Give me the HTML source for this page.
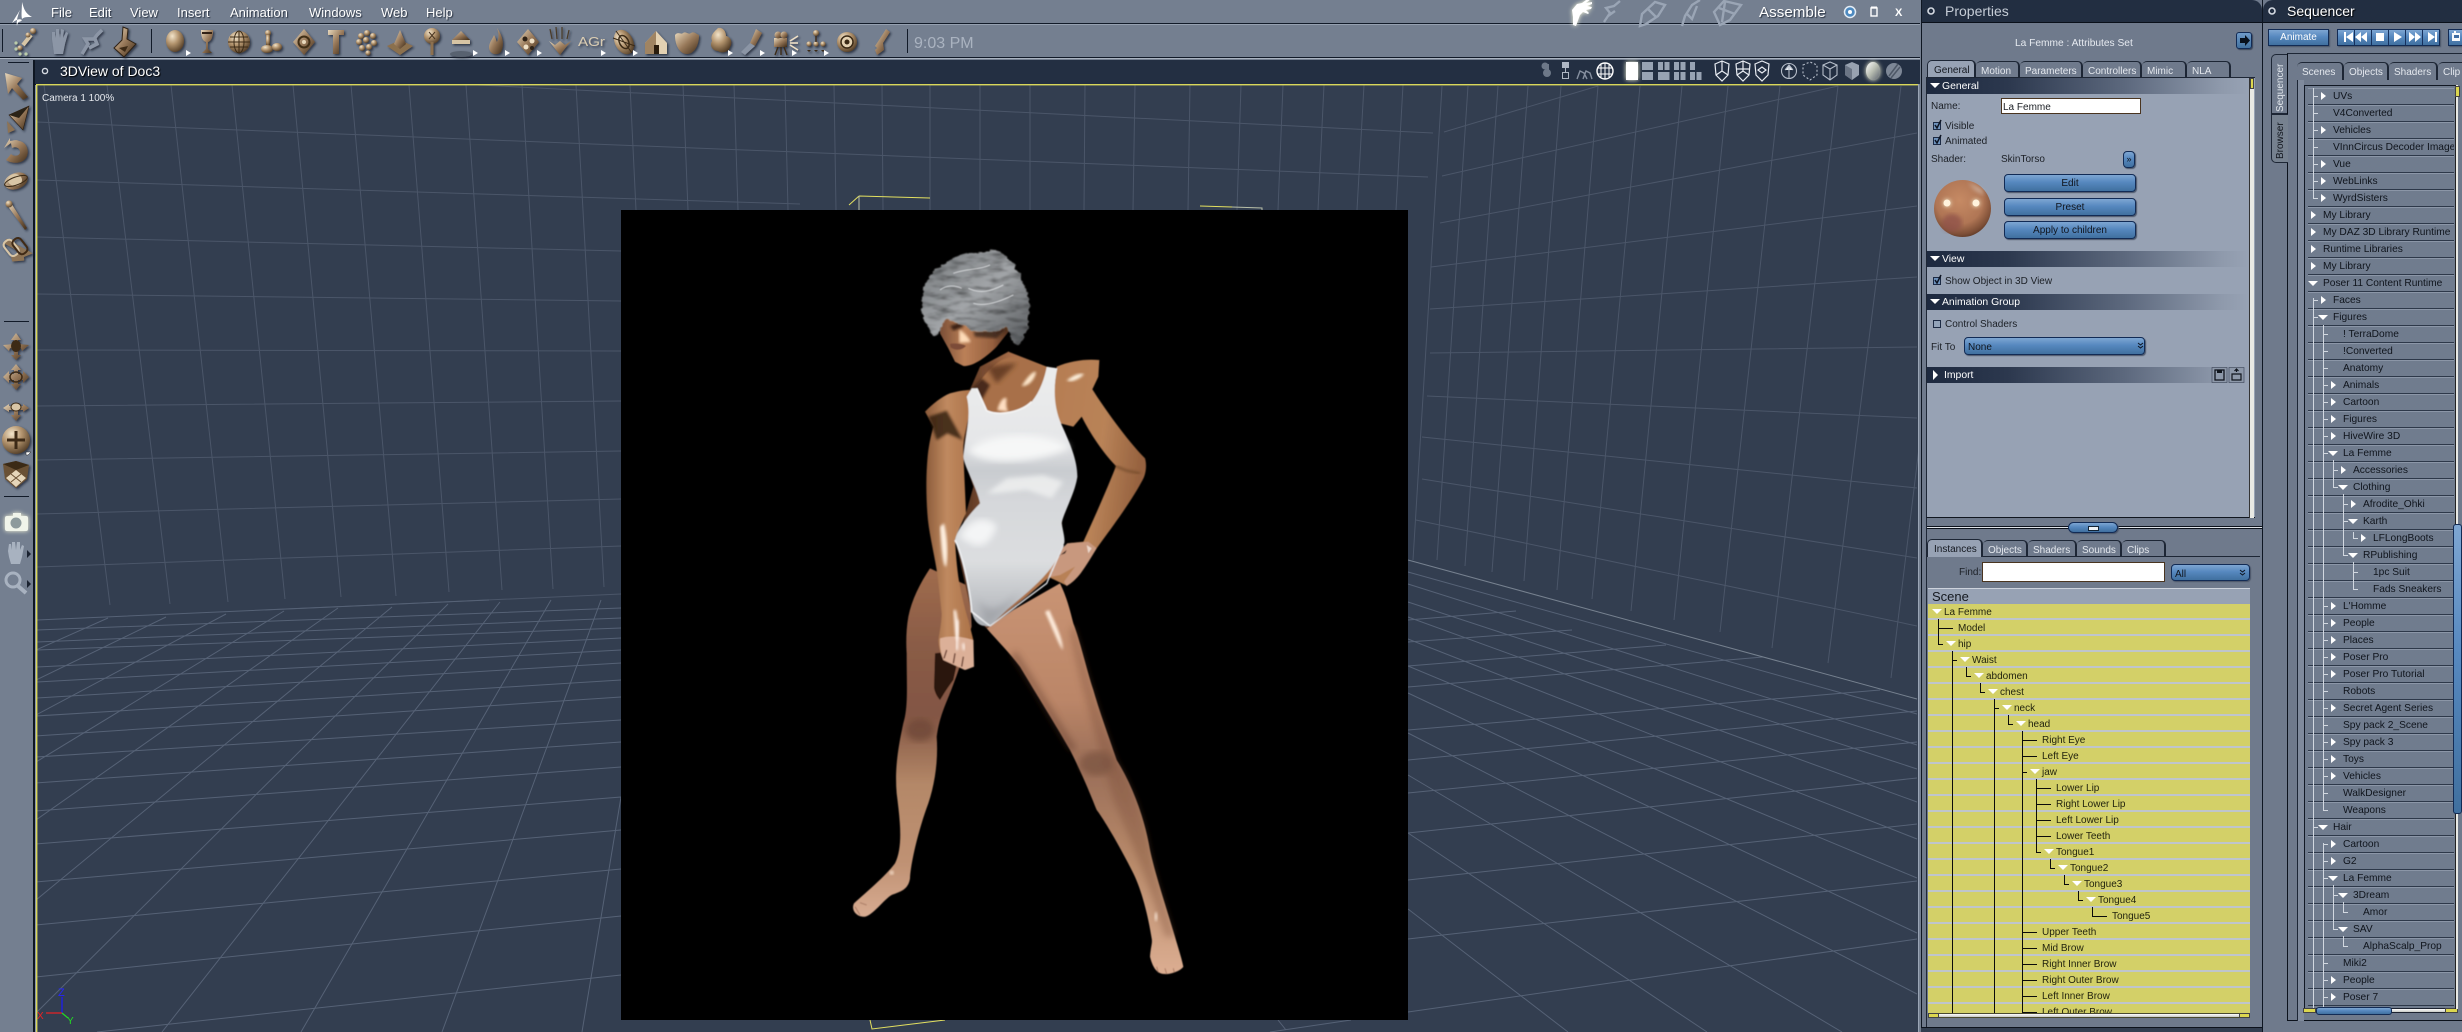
<!DOCTYPE html>
<html><head><meta charset="utf-8"><style>
html,body{margin:0;padding:0;width:2462px;height:1032px;overflow:hidden;background:#747f90;font-family:"Liberation Sans",sans-serif}
.a{position:absolute}
.t{position:absolute;white-space:nowrap;font-size:10px;line-height:12px;margin-top:1px;color:#1c2026}
.m{position:absolute;white-space:nowrap;font-size:13px;line-height:16px;top:5px;color:#fff;text-shadow:1px 1px 1px #2a3342}
.tab{position:absolute;box-sizing:border-box;height:17px;background:#6f7a8c;border-top:1px solid #1d2635;border-right:2px solid #1d2635;border-radius:5px 5px 0 0;color:#e4e8ee;font-size:10px;line-height:20px;padding-left:5px;white-space:nowrap;overflow:hidden}
.tab.on{background:#97a2b4;color:#14181f;border-left:1px solid #1d2635;padding-left:6px;height:18px}
.sec{position:absolute;left:1927px;width:321px;height:16px;background:linear-gradient(90deg,#1d293f,#2c384e 25%,#5d697e 62%,#8f9aac 92%,#97a2b4);color:#fff;font-size:10.4px;line-height:17px;padding-left:15px;box-sizing:border-box}
.sec:before{content:"";position:absolute;left:3px;top:5px;border-top:5px solid #fff;border-left:5px solid transparent;border-right:5px solid transparent}
.sec.c:before{left:6px;top:3px;border-left:5px solid #fff;border-right:0;border-top:5px solid transparent;border-bottom:5px solid transparent}
.btn{position:absolute;box-sizing:border-box;background:linear-gradient(#7ea6d2,#5688bf 45%,#40709f);border:1px solid #122b55;border-radius:4px;box-shadow:1px 1px 1px #4a5568;color:#10151d;font-size:10px;text-align:center;line-height:17px}
.sr{position:absolute;left:1928px;width:322px}
.y{box-sizing:border-box;height:16px;background:#d3d068;border-bottom:2px solid;border-image:linear-gradient(#7c88a6 50%,#bfc5cc 50%) 2;position:relative;font-size:10px;line-height:17px;color:#23240f;white-space:nowrap;padding-left:var(--x)}
.y.d:before{content:"";position:absolute;left:calc(var(--x) - 12px);top:5px;border-top:5px solid #fff;border-left:5px solid transparent;border-right:5px solid transparent}
.r{box-sizing:border-box;height:17px;background:#707c8e;border-bottom:1px solid #2d3849;box-shadow:inset 0 1px 0 #8b96a7;position:relative;font-size:10.2px;line-height:17px;color:#0f141c;white-space:nowrap;padding-left:var(--x)}
.r.o:before{content:"";position:absolute;left:calc(var(--x) - 12px);top:4px;border-left:5px solid #fff;border-top:4px solid transparent;border-bottom:4px solid transparent}
.r.d:before{content:"";position:absolute;left:calc(var(--x) - 15px);top:6px;border-top:5px solid #fff;border-left:5px solid transparent;border-right:5px solid transparent}
.l0{--x:15px}.l1{--x:25px}.l2{--x:35px}.l3{--x:45px}.l4{--x:55px}.l5{--x:65px}
</style></head><body>

<!-- top bars -->
<div class="a" style="left:0;top:0;width:1919px;height:23px;background:#747f90"></div>
<div class="a" style="left:0;top:23px;width:1920px;height:1px;background:#111a28"></div>
<div class="a" style="left:0;top:24px;width:1920px;height:1px;background:#95a0b0"></div>
<div class="a" style="left:0;top:57px;width:1920px;height:1px;background:#111a28"></div>
<div class="a" style="left:0;top:58px;width:1920px;height:1px;background:#aab3c0"></div>
<div class="m" style="left:51px">File</div><div class="m" style="left:89px">Edit</div><div class="m" style="left:130px">View</div><div class="m" style="left:177px">Insert</div><div class="m" style="left:230px">Animation</div><div class="m" style="left:309px">Windows</div><div class="m" style="left:381px">Web</div><div class="m" style="left:426px">Help</div>
<div class="a" style="left:1759px;top:4px;font-size:15.2px;line-height:18px;color:#fff;white-space:nowrap;text-shadow:1px 1px 1px #2a3342">Assemble</div>
<div class="a" style="left:914px;top:35px;font-size:16px;line-height:18px;color:#aab3c0;white-space:nowrap">9:03 PM</div>

<!-- left toolbar column -->
<div class="a" style="left:33px;top:60px;width:2px;height:972px;background:#0e1622"></div>
<div class="a" style="left:35px;top:60px;width:1px;height:972px;background:#8c97a8"></div>

<!-- 3D view -->
<div class="a" style="left:35px;top:60px;width:1885px;height:24px;background:#232f42"></div>
<div class="a" style="left:60px;top:63px;font-size:14px;line-height:16px;color:#fff;white-space:nowrap;text-shadow:1px 1px 1px #000">3DView of Doc3</div>
<div class="a" style="left:37px;top:84px;width:1882px;height:948px;background:#333e50;overflow:hidden"></div>
<svg class="a" style="left:0;top:0" width="1919" height="1032" viewBox="0 0 1919 1032">
<defs><clipPath id="vw"><rect x="37" y="85" width="1881" height="947"/></clipPath>
<linearGradient id="lg1v" x1="0" x2="0" y1="0" y2="1"><stop offset="0" stop-color="#a06c4e"/><stop offset=".22" stop-color="#8a5c46"/><stop offset=".42" stop-color="#835644"/><stop offset=".62" stop-color="#b48868"/><stop offset=".85" stop-color="#c09274"/><stop offset="1" stop-color="#d8ac92"/></linearGradient>
<linearGradient id="lg2" x1="0" x2="0" y1="0" y2="1"><stop offset="0" stop-color="#c99474"/><stop offset=".3" stop-color="#bb8668"/><stop offset=".47" stop-color="#9a6e58"/><stop offset=".72" stop-color="#b98b6b"/><stop offset="1" stop-color="#dcae92"/></linearGradient>
<linearGradient id="arm" x1="0" x2="1"><stop offset="0" stop-color="#8a5a3a"/><stop offset=".45" stop-color="#c08a60"/><stop offset="1" stop-color="#ab7248"/></linearGradient>
<linearGradient id="arm2" x1="0" x2="1" y1="0" y2=".3"><stop offset="0" stop-color="#b67d52"/><stop offset=".6" stop-color="#b98358"/><stop offset="1" stop-color="#96623f"/></linearGradient>
<linearGradient id="chest" x1="0" x2="1"><stop offset="0" stop-color="#4c2c1b"/><stop offset=".45" stop-color="#a56c48"/><stop offset="1" stop-color="#b98052"/></linearGradient>
<linearGradient id="face" x1="0" x2="1"><stop offset="0" stop-color="#7a4e36"/><stop offset=".35" stop-color="#bb8058"/><stop offset=".75" stop-color="#96603f"/><stop offset="1" stop-color="#4a2b1b"/></linearGradient>
<linearGradient id="suit" x1="0" x2="0" y1="0" y2="1"><stop offset="0" stop-color="#eceded"/><stop offset=".28" stop-color="#e6e7e9"/><stop offset=".4" stop-color="#c9ccd0"/><stop offset=".52" stop-color="#d6d8db"/><stop offset=".75" stop-color="#dcdee0"/><stop offset="1" stop-color="#aeb1b6"/></linearGradient>
<linearGradient id="hair" x1="0" x2="1" y1="0" y2="1"><stop offset="0" stop-color="#74787b"/><stop offset=".5" stop-color="#a2a5a8"/><stop offset="1" stop-color="#56595c"/></linearGradient>
<filter id="b4"><feGaussianBlur stdDeviation="4"/></filter><filter id="b7"><feGaussianBlur stdDeviation="7"/></filter><filter id="b10"><feGaussianBlur stdDeviation="10"/></filter>
<filter id="soft" x="-5%" y="-5%" width="110%" height="110%"><feGaussianBlur stdDeviation="1.800"/></filter>
<filter id="hf" x="-15%" y="-15%" width="130%" height="130%">
<feTurbulence type="fractalNoise" baseFrequency=".018 .06" numOctaves="3" seed="11" result="n"/>
<feDisplacementMap in="SourceGraphic" in2="n" scale="18" xChannelSelector="R" yChannelSelector="G" result="d"/>
<feColorMatrix in="n" type="matrix" values="1.5 0 0 0 .12 1.5 0 0 0 .12 1.5 0 0 0 .12 0 0 0 0 1" result="g"/>
<feComposite in="g" in2="d" operator="in" result="tex"/>
<feBlend in="tex" in2="d" mode="multiply" result="m"/>
<feGaussianBlur in="m" stdDeviation="2.200"/>
</filter>
</defs>
<g clip-path="url(#vw)" fill="none" stroke="#4b5669" stroke-width="1">
<path d="M478 85L1433 133M36 122L1428 177M36 180L800 204M36 237L621 251M36 294L621 301M36 350L621 351M36 406L621 401M36 460L621 451M36 514L621 499M36 567L621 546M265 610L621 594"/>
<path d="M44 85L110 605M107 85L170 604M171 85L228 602M232 85L285 599M293 85L341 597M351 85L396 596M409 85L449 592M466 85L502 590M522 85L553 589M576 85L604 587M630 85L636 210M683 85L688 210M734 85L738 210M785 85L788 210M834 85L836 210M882 85L883 210M930 85L930 210M980 85L980 210M1030 85L1030 210M1085 85L1084 210M1135 85L1133 210M1190 85L1188 210M1241 85L1237 210M1283 85L1278 210M1324 85L1318 210M1364 85L1357 210M1403 85L1396 210"/>
<path d="M1442 86L1413 560M1468 86L1437 560M1498 86L1465 566M1528 86L1492 572M1561 86L1524 581M1598 86L1557 590M1640 86L1592 599M1682 86L1631 611M1728 86L1674 620M1780 86L1720 632M1838 86L1772 648M1901 86L1828 663M1963 86L1891 678"/>
<path d="M1444 132L1598 86M1442 176L1838 86M1440 223L1917 133M1431 267L1917 206M1430 309L1917 277M1430 353L1917 347M1427 396L1917 418M1422 437L1917 488M1422 479L1917 558M1416 520L1917 626"/>
<g stroke="#566276">
<path d="M1408 572L1917 714M1408 584L1917 745M1408 602L1917 769M1408 617L1917 802M1408 639L1917 839M1408 666L1917 878M1408 693L1917 933M1408 733L1917 994M1408 775L1842 1032M1408 833L1707 1032M1408 909L1568 1032"/>
<path d="M1408 1012L1917 939M1408 939L1917 881M1408 880L1917 824M1408 833L1917 778M1408 793L1917 742M1408 760L1917 711M1408 730L1880 690M1408 687L1763 657M1408 666L1666 645M1408 642L1572 630M1408 620L1516 611"/>
</g>
<path d="M1408 560L1917 699" stroke="#76818f"/>
<g stroke="#566276">
<path d="M36 620L489 600M36 630L621 608M36 642L621 618M36 650L621 628M36 667L621 638M36 682L621 650M36 698L621 663M36 716L621 680M36 736L621 697M36 757L621 720M36 783L621 742M36 811L621 767M36 844L621 797M36 882L621 830M36 925L621 869M36 977L621 916M97 1032L621 975"/>
<path d="M36 650L108 618M36 680L166 617M36 715L226 614M36 762L284 611M36 820L338 608M36 900L392 607M36 1013L448 604M162 1032L500 602M301 1032L551 600M442 1032L601 600M582 1032L621 797"/>
<path d="M1270 1032L1351 1020M1278 1020L1286 1030"/>
</g>
</g>
<rect x="35" y="84" width="1884" height="1" fill="#0e1622"/>
<rect x="36" y="84" width="1883" height="1.400" fill="#d9d75a"/>
<rect x="36" y="84" width="1.400" height="948" fill="#d9d75a"/>
<rect x="1918" y="84" width="1" height="948" fill="#9aa5b5"/>
<rect x="1919" y="60" width="2" height="972" fill="#0e1622"/>
<path d="M859 196L930 198M859 196L849 205M1200 206L1232 207" stroke="#e3e060" fill="none"/>
<path d="M1232 207L1262 208L1262 211M859 196L859 210" stroke="#b8bfa8" fill="none"/>
<path d="M870 1020L872 1029L945 1020" stroke="#e3e060" fill="none"/>
<path d="M62 997V1013" stroke="#1a1aff" stroke-width="1.200"/><path d="M46 1013H62" stroke="#e22" stroke-width="1.200"/><path d="M62 1013L68 1018" stroke="#2d2" stroke-width="1.200"/>
<text x="58" y="996" fill="#2424ff" font-family="Liberation Sans" font-size="11">Z</text>
<text x="37" y="1019" fill="#e22" font-family="Liberation Sans" font-size="10">X</text>
<text x="67" y="1024" fill="#2d2" font-family="Liberation Sans" font-size="10">Y</text>
<text x="42" y="101" fill="#e6e9ee" font-family="Liberation Sans" font-size="10">Camera 1 100%</text>

<!-- render -->
<rect x="621" y="210" width="787" height="810" fill="#000"/>
<g transform="translate(840 220) scale(.33333)"><g filter="url(#soft)">
<path d="M270 1045C240 1090 215 1140 205 1190C198 1230 198 1270 200 1300C200 1400 205 1460 190 1510C170 1600 165 1660 170 1720C180 1800 190 1880 165 1930C135 1970 80 2015 42 2050C32 2070 50 2092 75 2090C100 2085 130 2040 155 2025C180 2015 205 2010 210 1975C212 1930 235 1830 265 1750C285 1690 295 1620 290 1550C300 1480 320 1450 345 1380C365 1330 380 1260 395 1220L390 1100Z" fill="url(#lg1v)"/>
<ellipse cx="240" cy="1530" rx="44" ry="34" fill="#6a4434" filter="url(#b10)" opacity=".7"/>
<path d="M285 1300L360 1290L340 1380C325 1400 312 1420 300 1440C290 1430 282 1410 282 1400Z" fill="#2a140c"/>
<path d="M440 1225L520 1170L660 1090C680 1130 690 1170 700 1210C720 1260 740 1350 760 1410C780 1480 810 1560 830 1620C880 1700 915 1800 930 1890C945 1960 975 2050 1005 2150C1015 2185 1025 2215 1030 2240C1020 2255 985 2264 975 2262C955 2262 940 2250 930 2210C932 2180 938 2170 935 2155C925 2090 905 2010 880 1960C850 1900 800 1810 770 1770C750 1720 730 1670 690 1590C650 1520 600 1440 540 1340C510 1300 470 1260 440 1225Z" fill="url(#lg2)"/>
<path d="M700 1210C720 1260 740 1350 760 1410C780 1480 810 1560 830 1620C880 1700 915 1800 930 1890C945 1960 975 2050 1005 2150L975 2150C930 2000 880 1880 820 1740C790 1620 720 1400 690 1240Z" fill="#7a4e38" opacity=".35" filter="url(#b10)"/>
<ellipse cx="770" cy="1630" rx="50" ry="36" fill="#7a5240" filter="url(#b10)" opacity=".7"/>
<path d="M520 1300C600 1420 640 1500 700 1590" stroke="#5a3626" stroke-width="22" opacity=".4" fill="none" filter="url(#b10)"/>
<path d="M385 520L420 440L505 395L620 440L650 445L640 540L660 610L712 770L665 900L670 1000L630 1070L560 1130L440 1225L395 1180L350 980L400 800L370 710Z" fill="url(#chest)"/>
<path d="M430 470C470 420 500 410 530 410L620 445L605 500L570 555L500 580L440 575L385 530Z" fill="#a87048"/>
<path d="M385 515L425 475L450 495L425 540L400 560Z" fill="#4a2c1a" filter="url(#b4)"/>
<path d="M440 440L530 430L470 490Z" fill="#6a4028" filter="url(#b7)"/>
<path d="M255 575C280 550 305 530 330 520C350 514 372 510 390 510L395 560C380 610 368 660 370 700L378 880C365 910 350 940 345 960C348 1010 352 1060 360 1100C368 1140 378 1180 385 1200L400 1260L400 1340L375 1350L310 1320C302 1300 295 1280 295 1260C300 1230 305 1205 305 1180C300 1130 295 1090 290 1050C280 990 265 930 262 880C258 820 258 770 262 720C265 680 272 650 280 620Z" fill="url(#arm)"/>
<path d="M265 590L320 572L368 660L322 640L290 660Z" fill="#2e1a10" opacity=".8" filter="url(#b4)"/>
<path d="M300 1255C330 1245 370 1250 400 1260L402 1340L375 1350L310 1320C302 1300 298 1275 300 1255Z" fill="#dcb098"/>
<path d="M312 1315L320 1290M340 1330L345 1300M365 1340L370 1310" stroke="#6a4234" stroke-width="4"/>
<path d="M650 440C690 422 740 416 778 420L775 470L757 508C790 560 860 660 915 715C922 740 916 768 905 785C870 850 810 930 770 985L722 1058C710 1075 695 1090 680 1097L628 1072L675 1000L682 970L730 965C760 900 800 810 828 738C790 700 750 640 725 590L700 620L660 610L640 540Z" fill="url(#arm2)"/>
<path d="M640 1010L682 970L745 965L770 985C755 1010 740 1035 722 1060C710 1075 695 1090 680 1098L672 1085L705 1040L660 1065L625 1072Z" fill="#c8987e"/>
<path d="M642 1020L680 990L675 1000L640 1012Z" fill="#1a0e0a"/>
<path d="M825 738L860 752L900 760" stroke="#6a4428" stroke-width="5" fill="none" filter="url(#b4)"/>
<path d="M380 530L395 505L410 505L440 572C480 590 545 575 575 545C600 515 615 470 620 440L652 445C640 500 640 560 665 615C690 670 712 720 712 770C705 820 670 880 665 910C670 940 678 965 670 975C640 1060 570 1110 500 1170L450 1218C425 1220 405 1215 395 1175C392 1120 370 1010 345 960C350 930 390 880 420 850C410 800 372 740 370 710C375 650 395 590 380 530Z" fill="url(#suit)"/>
<path d="M385 690C430 640 600 625 690 680C640 720 430 750 385 690Z" fill="#f6f7f7" filter="url(#b10)"/>
<path d="M440 820L500 775L610 765L670 785L635 835L560 810L470 820Z" fill="#eff0f0" filter="url(#b7)" opacity=".85"/>
<path d="M360 950C380 900 440 880 470 920C440 1000 400 980 360 950Z" fill="#f4f5f6" filter="url(#b10)"/>
<path d="M345 960C370 1010 392 1120 395 1175L450 1218" stroke="#f0f2f4" stroke-width="5" fill="none"/>
<path d="M450 1218L620 1090L670 975" stroke="#e4e6e9" stroke-width="4" fill="none"/>
<path d="M410 505L440 572C480 590 545 575 575 545" stroke="#f6f6f6" stroke-width="5" fill="none"/>
<path d="M400 1100C420 1180 470 1190 540 1110L500 1170L440 1215Z" fill="#8e9196" opacity=".45" filter="url(#b10)"/>
<path d="M680 482C700 465 720 458 732 462C720 476 695 488 680 482Z" fill="#fff3e0" filter="url(#b4)"/>
<path d="M545 498C560 475 575 455 588 455C585 478 565 500 545 498Z" fill="#ffe8cc" filter="url(#b4)"/>
<path d="M472 570C480 540 492 530 500 535C498 550 498 565 505 575Z" fill="#ffdfc2" filter="url(#b4)"/>
<path d="M300 920C305 1000 310 1040 318 1040C325 1010 322 950 312 910Z" fill="#fff0e0" filter="url(#b4)"/>
<path d="M340 1170C345 1220 345 1262 352 1262C358 1240 355 1200 348 1170Z" fill="#ffefe2" filter="url(#b4)"/>
<path d="M615 1175C640 1230 655 1270 668 1290C670 1255 640 1200 628 1170Z" fill="#ffeddd" filter="url(#b4)"/>
<path d="M352 1200L350 1290M370 1270L372 1290" stroke="#fff4ee" stroke-width="7" fill="none" filter="url(#b4)"/>
<circle cx="155" cy="1958" r="6" fill="#f4dcc8" filter="url(#b4)"/>
<ellipse cx="948" cy="2090" rx="4" ry="14" fill="#f4e0d0" filter="url(#b4)"/>
<path d="M740 975L755 985L745 1000Z" fill="#ecd8cc"/>
<path d="M45 2060L60 2085M60 2048L80 2055" stroke="#8c5c48" stroke-width="3" opacity=".6"/>
<path d="M950 2240L955 2258M975 2245L980 2262M1000 2245L1003 2258" stroke="#8c5c48" stroke-width="3" opacity=".6"/>
<path d="M300 300L330 280L490 285L510 330L470 380C440 410 400 440 370 438L345 425L325 385L300 340Z" fill="url(#face)"/>
<path d="M358 328C375 340 388 355 392 366L358 368Z" fill="#ffdcb8" filter="url(#b4)"/>
<path d="M330 372C345 368 370 372 378 378C365 392 345 392 332 382Z" fill="#7c4b38"/>
<path d="M330 318L365 305L370 320L340 332Z" fill="#3a2418" filter="url(#b4)"/>
<path d="M400 335L500 325L470 355L405 350Z" fill="#2c1a12" opacity=".7" filter="url(#b4)"/>
</g>
<!-- hair -->
<path d="M248 225C258 175 285 140 315 132C350 100 420 90 472 97C512 115 532 140 542 175C562 212 572 245 565 292C566 325 556 350 532 374C517 364 508 345 502 318C480 336 440 336 395 334C370 315 345 298 320 300C308 318 300 338 282 346C262 330 254 308 252 285C243 265 244 243 248 225Z" fill="url(#hair)" filter="url(#hf)"/>
<g fill="none" stroke="#e8eaec" stroke-width="3" opacity=".75" filter="url(#soft)">
<path d="M385 205C420 222 450 215 490 195"/><path d="M400 250C440 262 490 240 520 225"/><path d="M340 160C380 145 420 150 450 135"/><path d="M300 210C320 195 345 195 365 205"/>
</g>
</g>
</svg>

<!-- Properties panel -->
<div class="a" style="left:1921px;top:0;width:341px;height:1032px;background:#6f7a8c"></div>
<div class="a" style="left:1921px;top:0;width:341px;height:23px;background:#222e41;border-bottom:1px solid #0a101a;border-radius:0 10px 0 0;box-sizing:border-box"></div>
<div class="a" style="left:1945px;top:3px;font-size:14px;line-height:16px;color:#c5ccd6;white-space:nowrap">Properties</div>
<div class="t" style="left:2015px;top:37px;width:116px;color:#e6eaf0;font-size:10.2px">La Femme : Attributes Set</div>
<div class="a" style="left:2236px;top:32px;width:16px;height:17px;background:linear-gradient(#6e9ac8,#41719f);border:1px solid #122b55;border-radius:3px;box-sizing:border-box;box-shadow:1px 1px 1px #3a4456"></div>
<div class="tab on" style="left:1927px;top:60px;width:49px">General</div>
<div class="tab" style="left:1976px;top:61px;width:44px">Motion</div>
<div class="tab" style="left:2020px;top:61px;width:63px">Parameters</div>
<div class="tab" style="left:2083px;top:61px;width:59px">Controllers</div>
<div class="tab" style="left:2142px;top:61px;width:45px">Mimic</div>
<div class="tab" style="left:2187px;top:61px;width:44px">NLA</div>
<div class="a" style="left:1926px;top:77px;width:329px;height:441px;background:#97a2b4;border-left:1px solid #1d2635;border-bottom:1px solid #10161f;border-top:1px solid #1d2635;box-sizing:border-box"></div>
<div class="a" style="left:2249px;top:78px;width:4px;height:440px;background:#e8e9e4;border-left:1px solid #333"></div>
<div class="a" style="left:2250px;top:78px;width:4px;height:11px;background:#dcd74f;border:1px solid #444;box-sizing:border-box"></div>
<div class="sec" style="top:78px">General</div>
<div class="sec" style="top:251px">View</div>
<div class="sec" style="top:294px">Animation Group</div>
<div class="sec c" style="top:367px;padding-left:17px">Import</div>
<div class="t" style="left:1931px;top:100px">Name:</div>
<div class="a" style="left:2001px;top:98px;width:140px;height:16px;background:#fff;border:1px solid #4a3520;box-sizing:border-box;font-size:10px;line-height:17px;padding-left:1px;color:#1c2026">La Femme</div>
<div class="t" style="left:1945px;top:120px">Visible</div>
<div class="t" style="left:1945px;top:135px">Animated</div>
<div class="t" style="left:1931px;top:153px">Shader:</div>
<div class="t" style="left:2001px;top:153px">SkinTorso</div>
<div class="btn" style="left:2123px;top:151px;width:12px;height:17px;line-height:14px;font-size:9px">&#187;</div>
<div class="btn" style="left:2004px;top:174px;width:132px;height:18px">Edit</div>
<div class="btn" style="left:2004px;top:198px;width:132px;height:18px">Preset</div>
<div class="btn" style="left:2004px;top:221px;width:132px;height:18px">Apply to children</div>
<div class="t" style="left:1945px;top:275px">Show Object in 3D View</div>
<div class="t" style="left:1945px;top:318px">Control Shaders</div>
<div class="t" style="left:1931px;top:341px">Fit To</div>
<div class="btn" style="left:1964px;top:337px;width:181px;height:18px;text-align:left;padding-left:3px;line-height:20px">None</div>
<div class="a" style="left:1926px;top:526px;width:337px;height:3px;border-top:1px solid #0c121c;border-bottom:1px solid #0c121c;background:#dfe3e8;box-sizing:border-box"></div>
<div class="btn" style="left:2068px;top:522px;width:50px;height:11px;border-radius:6px"></div>
<div class="a" style="left:2088px;top:526px;width:9px;height:3px;background:#eef2f7;border:1px solid #123"></div>
<div class="tab on" style="left:1927px;top:539px;width:56px">Instances</div>
<div class="tab" style="left:1983px;top:540px;width:45px">Objects</div>
<div class="tab" style="left:2028px;top:540px;width:49px">Shaders</div>
<div class="tab" style="left:2077px;top:540px;width:45px">Sounds</div>
<div class="tab" style="left:2122px;top:540px;width:44px">Clips</div>
<div class="a" style="left:1983px;top:556px;width:277px;height:1px;background:#1d2635"></div>
<div class="t" style="left:1959px;top:566px">Find:</div>
<div class="a" style="left:1982px;top:562px;width:183px;height:20px;background:#fff;border:1px solid #4a3520;box-sizing:border-box"></div>
<div class="btn" style="left:2171px;top:564px;width:79px;height:17px;text-align:left;padding-left:3px;line-height:19px">All</div>
<div class="a" style="left:1928px;top:588px;width:322px;height:1px;background:#ccd2dc"></div>
<div class="a" style="left:1928px;top:589px;width:322px;height:15px;background:#97a2b4;font-size:13px;line-height:15px;color:#14181f;padding-left:4px;box-sizing:border-box">Scene</div>
<div class="a" style="left:1926px;top:518px;width:1px;height:510px;background:#1d2635"></div>
<div class="a" style="left:1921px;top:1027px;width:341px;height:5px;background:#333e50;border-top:1px solid #0c121c;box-sizing:border-box"></div>
<div class="a" style="left:1921px;top:0;width:1px;height:1027px;background:#0e1622"></div>
<div class="a" style="left:2262px;top:0;width:1px;height:1032px;background:#0e1622"></div>

<!-- Scene tree -->
<div class="sr" style="top:604px;height:409px;overflow:hidden">
<div class="y d" style="--x:16px">La Femme</div>
<div class="y" style="--x:30px">Model</div>
<div class="y d" style="--x:30px">hip</div>
<div class="y d" style="--x:44px">Waist</div>
<div class="y d" style="--x:58px">abdomen</div>
<div class="y d" style="--x:72px">chest</div>
<div class="y d" style="--x:86px">neck</div>
<div class="y d" style="--x:100px">head</div>
<div class="y" style="--x:114px">Right Eye</div>
<div class="y" style="--x:114px">Left Eye</div>
<div class="y d" style="--x:114px">jaw</div>
<div class="y" style="--x:128px">Lower Lip</div>
<div class="y" style="--x:128px">Right Lower Lip</div>
<div class="y" style="--x:128px">Left Lower Lip</div>
<div class="y" style="--x:128px">Lower Teeth</div>
<div class="y d" style="--x:128px">Tongue1</div>
<div class="y d" style="--x:142px">Tongue2</div>
<div class="y d" style="--x:156px">Tongue3</div>
<div class="y d" style="--x:170px">Tongue4</div>
<div class="y" style="--x:184px">Tongue5</div>
<div class="y" style="--x:114px">Upper Teeth</div>
<div class="y" style="--x:114px">Mid Brow</div>
<div class="y" style="--x:114px">Right Inner Brow</div>
<div class="y" style="--x:114px">Right Outer Brow</div>
<div class="y" style="--x:114px">Left Inner Brow</div>
<div class="y" style="--x:114px">Left Outer Brow</div>
</div>
<div class="a" style="left:1928px;top:1013px;width:322px;height:5px;background:linear-gradient(#fff,#c6c9c4);border:1px solid #4a4a30;box-sizing:border-box"></div>
<div class="a" style="left:1928px;top:1013px;width:11px;height:5px;background:#dcd74f;border:1px solid #444;box-sizing:border-box"></div>
<div class="a" style="left:2239px;top:1013px;width:11px;height:5px;background:#dcd74f;border:1px solid #444;box-sizing:border-box"></div>
<svg class="a" style="left:1920px;top:600px" width="340" height="420" viewBox="1920 600 340 420">
<g stroke="#0b0b0b" stroke-width="1" fill="none" shape-rendering="crispEdges">
<path d="M1938.500 619V644.500H1943M1938.500 628.500H1953M1952.500 651V1013M1952.500 660.500H1957M1966.500 667V676.500H1971M1980.500 683V692.500H1985M1994.500 699V1013M1994.500 708.500H1999M2008.500 715V724.500H2013M2022.500 731V1013"/>
<path d="M2022.500 740.500H2037M2022.500 756.500H2037M2022.500 772.500H2027M2036.500 779V852.500H2041M2036.500 788.500H2051M2036.500 804.500H2051M2036.500 820.500H2051M2036.500 836.500H2051M2050.500 859V868.500H2055M2064.500 875V884.500H2069M2078.500 891V900.500H2083M2092.500 907V916.500H2107M2022.500 932.500H2037M2022.500 948.500H2037M2022.500 964.500H2037M2022.500 980.500H2037M2022.500 996.500H2037M2022.500 1012.500H2037"/>
</g></svg>

<!-- Sequencer panel -->
<div class="a" style="left:2263px;top:0;width:199px;height:1032px;background:#6f7a8c"></div>
<div class="a" style="left:2263px;top:0;width:199px;height:23px;background:#222e41;border-bottom:1px solid #0a101a;box-sizing:border-box;border-radius:10px 0 0 0"></div>
<div class="a" style="left:2287px;top:3px;font-size:14px;line-height:16px;color:#fff;white-space:nowrap;text-shadow:1px 1px 1px #000">Sequencer</div>
<div class="btn" style="left:2268px;top:29px;width:61px;height:17px;color:#fff;border-radius:0;line-height:16px">Animate</div>
<div class="btn" style="left:2337px;top:29px;width:103px;height:17px;border-radius:0"></div>
<div class="btn" style="left:2448px;top:29px;width:20px;height:17px;border-radius:0"></div>
<div class="a" style="left:2287px;top:53px;width:175px;height:968px;border-left:1px solid #0c121c;border-top:1px solid #1d2635;border-bottom:1px solid #0c121c;box-sizing:border-box;background:#6f7a8c"></div>
<div class="a" style="left:2271px;top:54px;width:16px;height:60px;background:#6f7a8c;border:1px solid #1d2635;border-right:0;border-radius:5px 0 0 0;box-sizing:border-box"></div>
<div class="a" style="left:2271px;top:114px;width:17px;height:49px;background:#76818f;border:1px solid #1d2635;border-right:0;border-radius:0 0 0 5px;box-sizing:border-box"></div>
<div class="a" style="left:2274px;top:112px;width:60px;height:14px;transform-origin:0 0;transform:rotate(-90deg);font-size:10px;line-height:14px;color:#dfe4ea;white-space:nowrap;text-align:left">Sequencer</div>
<div class="a" style="left:2274px;top:159px;width:46px;height:14px;transform-origin:0 0;transform:rotate(-90deg);font-size:10px;line-height:14px;color:#14181f;white-space:nowrap">Browser</div>
<div class="tab" style="left:2297px;top:62px;width:47px;height:18px">Scenes</div>
<div class="tab" style="left:2344px;top:62px;width:45px;height:18px">Objects</div>
<div class="tab" style="left:2389px;top:62px;width:49px;height:18px">Shaders</div>
<div class="tab" style="left:2438px;top:62px;width:30px;height:18px;border-right:0">Clip</div>
<div class="a" style="left:2297px;top:80px;width:7px;height:941px;background:#7f8a9c;border-left:1px solid #1d2635;box-sizing:border-box"></div>
<div class="a" style="left:2304px;top:85px;width:152px;height:924px;background:#707c8e;border:1px solid #111824;border-right:0;box-sizing:border-box"></div>
<div class="a" style="left:2308px;top:88px;width:146px;height:920px;overflow:hidden">
<div class="r l1 o">UVs</div><div class="r l1">V4Converted</div><div class="r l1 o">Vehicles</div><div class="r l1">VInnCircus Decoder Images</div><div class="r l1 o">Vue</div><div class="r l1 o">WebLinks</div><div class="r l1 o">WyrdSisters</div>
<div class="r l0 o">My Library</div><div class="r l0 o">My DAZ 3D Library Runtime</div><div class="r l0 o">Runtime Libraries</div><div class="r l0 o">My Library</div><div class="r l0 d">Poser 11 Content Runtime</div>
<div class="r l1 o">Faces</div><div class="r l1 d">Figures</div>
<div class="r l2">! TerraDome</div><div class="r l2">!Converted</div><div class="r l2">Anatomy</div><div class="r l2 o">Animals</div><div class="r l2 o">Cartoon</div><div class="r l2 o">Figures</div><div class="r l2 o">HiveWire 3D</div><div class="r l2 d">La Femme</div>
<div class="r l3 o">Accessories</div><div class="r l3 d">Clothing</div><div class="r l4 o">Afrodite_Ohki</div><div class="r l4 d">Karth</div><div class="r l5 o">LFLongBoots</div><div class="r l4 d">RPublishing</div><div class="r l5">1pc Suit</div><div class="r l5">Fads Sneakers</div>
<div class="r l2 o">L'Homme</div><div class="r l2 o">People</div><div class="r l2 o">Places</div><div class="r l2 o">Poser Pro</div><div class="r l2 o">Poser Pro Tutorial</div><div class="r l2">Robots</div><div class="r l2 o">Secret Agent Series</div><div class="r l2">Spy pack 2_Scene</div><div class="r l2 o">Spy pack 3</div><div class="r l2 o">Toys</div><div class="r l2 o">Vehicles</div><div class="r l2">WalkDesigner</div><div class="r l2">Weapons</div>
<div class="r l1 d">Hair</div><div class="r l2 o">Cartoon</div><div class="r l2 o">G2</div><div class="r l2 d">La Femme</div><div class="r l3 d">3Dream</div><div class="r l4">Amor</div><div class="r l3 d">SAV</div><div class="r l4">AlphaScalp_Prop</div><div class="r l2">Miki2</div><div class="r l2 o">People</div><div class="r l2 o">Poser 7</div>
</div>
<svg class="a" style="left:2304px;top:85px" width="158" height="924" viewBox="2304 85 158 924">
<g stroke="#d2d8e0" stroke-width="1" fill="none" shape-rendering="crispEdges">
<path d="M2313.500 88V198.500H2318M2313.500 96.500H2318M2313.500 113.500H2318M2313.500 130.500H2318M2313.500 147.500H2318M2313.500 164.500H2318M2313.500 181.500H2318"/>
<path d="M2313.500 298V1008M2313.500 300.500H2318M2313.500 317.500H2318M2313.500 827.500H2318"/>
<path d="M2323.500 325V810.500H2328M2323.500 334.500H2328M2323.500 351.500H2328M2323.500 368.500H2328M2323.500 385.500H2328M2323.500 402.500H2328M2323.500 419.500H2328M2323.500 436.500H2328M2323.500 453.500H2328M2323.500 606.500H2328M2323.500 623.500H2328M2323.500 640.500H2328M2323.500 657.500H2328M2323.500 674.500H2328M2323.500 691.500H2328M2323.500 708.500H2328M2323.500 725.500H2328M2323.500 742.500H2328M2323.500 759.500H2328M2323.500 776.500H2328M2323.500 793.500H2328"/>
<path d="M2323.500 843V1008M2323.500 844.500H2328M2323.500 861.500H2328M2323.500 878.500H2328M2323.500 963.500H2328M2323.500 980.500H2328M2323.500 997.500H2328"/>
<path d="M2333.500 460V487.500H2338M2333.500 470.500H2338M2333.500 885V929.500H2338M2333.500 895.500H2338"/>
<path d="M2343.500 494V555.500H2348M2343.500 504.500H2348M2343.500 521.500H2348M2343.500 902V912.500H2348M2343.500 936V946.500H2348"/>
<path d="M2353.500 532V538.500H2358M2353.500 562V589.500H2358M2353.500 572.500H2358"/>
</g></svg>
<div class="a" style="left:2303px;top:1008px;width:155px;height:5px;background:linear-gradient(#fff,#c6c9c4);border:1px solid #1c2230;box-sizing:border-box"></div>
<div class="a" style="left:2303px;top:1008px;width:13px;height:5px;background:#dcd74f;border:1px solid #444;box-sizing:border-box"></div>
<div class="a" style="left:2445px;top:1008px;width:13px;height:5px;background:#dcd74f;border:1px solid #444;box-sizing:border-box"></div>
<div class="btn" style="left:2316px;top:1007px;width:76px;height:8px;border-radius:3px;box-shadow:none"></div>
<div class="a" style="left:2455px;top:85px;width:3px;height:924px;background:#e8e9e4;border-left:1px solid #222;box-sizing:border-box"></div>
<div class="a" style="left:2455px;top:86px;width:5px;height:11px;background:#dcd74f;border:1px solid #444;box-sizing:border-box"></div>
<div class="btn" style="left:2453px;top:524px;width:9px;height:290px;border-radius:3px;box-shadow:none"></div>

<!-- icon overlay -->
<svg class="a" style="left:0;top:0" width="2462" height="1032" viewBox="0 0 2462 1032">
<defs>
<radialGradient id="b" cx=".35" cy=".28" r=".85"><stop offset="0" stop-color="#f2e4ca"/><stop offset=".42" stop-color="#b3946e"/><stop offset="1" stop-color="#3f2c18"/></radialGradient>
<linearGradient id="bl" x1="0" x2="1" y1="0" y2="1"><stop offset="0" stop-color="#e8d8bc"/><stop offset=".5" stop-color="#98795a"/><stop offset="1" stop-color="#3f2c18"/></linearGradient>
<filter id="s" x="-30%" y="-30%" width="170%" height="170%"><feDropShadow dx="1.500" dy="1.500" stdDeviation="1" flood-color="#1c2432" flood-opacity=".75"/></filter>
<filter id="gl" x="-60%" y="-60%" width="220%" height="220%"><feDropShadow dx="0" dy="0" stdDeviation="2.500" flood-color="#ffffe0"/></filter>
<filter id="bs"><feGaussianBlur stdDeviation="2.200"/></filter>
<linearGradient id="ball" x1="0" x2="1" y1="0" y2="1"><stop offset="0" stop-color="#fff"/><stop offset=".5" stop-color="#b7bcb0"/><stop offset="1" stop-color="#5b6270"/></linearGradient>
<radialGradient id="sk" cx=".45" cy=".36" r=".66"><stop offset="0" stop-color="#c68a64"/><stop offset=".62" stop-color="#b07655"/><stop offset=".9" stop-color="#7c4e36"/><stop offset="1" stop-color="#5f3a28"/></radialGradient>
</defs>
<path d="M22 2C24 9 25 13 32 17C26 17 24 17 22 19C21 15 22 8 22 2ZM20 10C17 15 15 18 12 23C16 20 19 18 22 20C20 23 18 20 17 26C16 21 18 15 20 10Z" fill="#fff"/>
<g stroke="#111a28"><path d="M2.500 29V52M151.500 29V53M907.500 29V53M8 62.500H29M4 321.500H29M4 496.500H29"/></g>
<circle cx="1931" cy="11" r="3" fill="none" stroke="#d5dae2" stroke-width="1.600"/><circle cx="2272" cy="11" r="3" fill="none" stroke="#d5dae2" stroke-width="1.600"/><circle cx="45" cy="71" r="2.600" fill="none" stroke="#d5dae2" stroke-width="1.400"/>
<g filter="url(#s)">
<g transform="translate(25 42)"><path d="M-2 3L6 -7" stroke="#d8c6a6" stroke-width="4"/><circle cx="8" cy="-11" r="3" fill="url(#b)"/><circle cx="3" cy="-7" r="2.500" fill="url(#b)"/><circle cx="-5" cy="6" r="2.600" fill="url(#b)"/><circle cx="-9" cy="1" r="1.600" fill="#bca"/><circle cx="-9" cy="7" r="1.600" fill="#bca"/><circle cx="-5" cy="12" r="1.600" fill="#bca"/><circle cx="1" cy="12" r="1.600" fill="#bca"/></g>
<g transform="translate(60 42)" fill="#8c96a6"><path d="M-8 -3L-8 -10L-5 -10L-4 -4L-4 -13L-1 -13L0 -4L1 -13L4 -12L3 -4L6 -10L8 -9L5 2L3 12L-6 12L-7 4Z"/></g>
<g transform="translate(92 42)" fill="none" stroke="#8c96a6" stroke-width="3.500"><path d="M-10 12L-4 2L-7 -3L2 -3L5 -7L10 -12M-3 6L5 2L3 -3"/></g>
<g transform="translate(125 42)"><path d="M-2 -15L3 -13L2 -3L11 2L-1 15L-11 6L-3 -2Z" fill="url(#bl)" stroke="#2e2214" stroke-width="1"/><path d="M-6 6L3 4L0 10Z" fill="#3c2c18"/></g>
<ellipse cx="175" cy="41" rx="9" ry="11" fill="url(#b)"/>
<g transform="translate(207 42)"><path d="M-6 -12H6C6 -4 4 -1 1 0V7L5 11H-5L-1 7V0C-4 -1 -6 -4 -6 -12Z" fill="url(#bl)"/><path d="M-5 -9H5" stroke="#302212" stroke-width="2"/></g>
<g transform="translate(239 42)"><circle r="11" fill="url(#b)"/><g fill="none" stroke="#3a2a16"><ellipse rx="5" ry="11"/><path d="M-11 0H11M-9 -5H9M-9 5H9M0 -11V11"/></g></g>
<g transform="translate(271 42)" fill="url(#b)"><circle cx="-3" cy="-9" r="3"/><rect x="-5" y="-7" width="4" height="11"/><ellipse cx="-4" cy="7" rx="6" ry="4"/><ellipse cx="6" cy="5" rx="5" ry="4"/></g>
<g transform="translate(304 42)"><path d="M0 -13L11 0L0 13L-11 0Z" fill="url(#bl)"/><circle r="5.500" fill="none" stroke="#3f2e18" stroke-width="2"/><circle r="2" fill="#e8d8bc"/></g>
<g transform="translate(336 42)"><path d="M-8 -12H8V-7H3V12H-3V-7H-8Z" fill="url(#bl)"/></g>
<g transform="translate(367 42)" fill="url(#b)"><circle cx="-6" cy="-6" r="3"/><circle cx="0" cy="-9" r="3"/><circle cx="6" cy="-6" r="3"/><circle cx="-8" cy="0" r="3"/><circle cx="-1" cy="-2" r="3"/><circle cx="7" cy="1" r="3"/><circle cx="-5" cy="6" r="3"/><circle cx="2" cy="5" r="3"/><circle cx="1" cy="11" r="2.600"/></g>
<g transform="translate(400 42)"><path d="M0 -2L13 4L0 13L-13 4Z" fill="#8b6f4e"/><path d="M0 -12L6 2L0 7L-6 2Z" fill="url(#bl)"/></g>
<g transform="translate(432 42)"><ellipse cy="-6" rx="8" ry="8" fill="url(#b)"/><rect x="-1.500" y="0" width="3" height="13" fill="#8c7050"/><path d="M-3 -10L3 -3M3 -10L-3 -3" stroke="#4a3620"/></g>
<g transform="translate(461 42)"><path d="M0 -11L9 -2L-9 -2Z" fill="url(#bl)"/><rect x="-9" y="-2" width="18" height="4" fill="#d6c4a4"/><ellipse cy="12" rx="11" ry="3" fill="#59626f"/></g>
<g transform="translate(496 42)"><path d="M1 -14C8 -4 8 4 5 10C3 13 -4 13 -6 9C-9 3 -4 -2 -2 -7C0 -4 0 -1 1 0C3 -4 3 -9 1 -14Z" fill="url(#bl)"/></g>
<g transform="translate(528 42)"><path d="M0 -13L11 0L0 13L-11 0Z" fill="url(#bl)"/><circle cx="-3" cy="-3" r="2.500" fill="#2e2214"/><circle cx="4" cy="-1" r="2.500" fill="#efe0c6"/><circle cx="-2" cy="5" r="2.500" fill="#efe0c6"/><circle cx="4" cy="6" r="2" fill="#2e2214"/></g>
<g transform="translate(560 42)"><path d="M-11 -1L0 13L11 -1L5 3L0 -1L-5 3Z" fill="url(#bl)"/><path d="M-8 -3L-10 -13M-3 -3L-4 -15M2 -3L2 -15M7 -3L9 -12" stroke="#4a3a28" stroke-width="1.200"/></g>
<g transform="translate(624 42)"><ellipse rx="9" ry="13" transform="rotate(-28)" fill="url(#b)"/><ellipse rx="4.500" ry="7" transform="rotate(-28)" fill="none" stroke="#3a2a16" stroke-width="1.500"/><path d="M-8 -11L8 11M-11 -4L11 4" stroke="#3a2a16"/></g>
<g transform="translate(656 42)"><path d="M-11 12V1L0 -11L11 1V12Z" fill="#e3d1b2"/><path d="M-11 1L0 -11L0 12H-11Z" fill="#a08462"/><rect x="-2" y="3" width="5" height="9" fill="#2a1e10"/></g>
<g transform="translate(687 42)"><path d="M-12 -7C-9 -11 -6 -7 -4 -9C-1 -11 1 -7 4 -9C7 -11 9 -8 12 -7C12 4 7 12 0 12C-7 12 -12 4 -12 -7Z" fill="url(#bl)"/></g>
<g transform="translate(721 42)"><path d="M-3 -14C3 -15 5 -9 5 -6C10 -5 12 1 9 5C8 10 1 12 -3 9C-8 9 -12 4 -9 -1C-11 -7 -7 -10 -3 -14Z" fill="url(#b)"/></g>
<g transform="translate(753 42)"><path d="M3 -13L9 -9L2 4L-3 1Z" fill="url(#bl)"/><path d="M-3 1L2 4L-8 13L-12 10Z" fill="#8b95a5"/></g>
<g transform="translate(785 42)" fill="url(#bl)"><rect x="-11" y="-4" width="13" height="9"/><circle cx="-7" cy="-7" r="3.500"/><circle cx="-1" cy="-7" r="3.500"/><path d="M-7 5L-10 13M-4 5L-4 13M-1 5L2 13" stroke="#3a2a16" stroke-width="1.400"/><path d="M5 -1L13 -6M5 1H13M5 3L13 8" stroke="#efe0c6" stroke-width="1.600"/></g>
<g transform="translate(816 42)" fill="url(#b)"><circle cy="-9" r="3"/><circle cx="-7" cy="2" r="2.600"/><circle cy="2" r="2.600"/><circle cx="7" cy="2" r="2.600"/><path d="M-9 8L-7 10L-5 8ZM-2 8L0 10L2 8ZM5 8L7 10L9 8Z" fill="#3a2a16"/><rect x="-.7" y="-6" width="1.400" height="6" fill="#3a2a16"/></g>
<g transform="translate(847 42)"><circle r="10" fill="url(#b)"/><circle r="6" fill="#e3d1b2" stroke="#3a2a16" stroke-width="1.500"/><circle r="2.500" fill="#3a2a16"/></g>
<g transform="translate(880 42)"><path d="M6 -13L10 -10L3 1L4 8L-3 13L-5 8L-3 6L-5 4L-1 -2Z" fill="url(#bl)"/></g>
</g>
<text x="578" y="46" fill="#d9ccb2" font-family="Liberation Sans" font-size="13" textLength="27" lengthAdjust="spacingAndGlyphs" filter="url(#s)">AGr</text>
<g fill="#fff"><path d="M186 50l5 3-5 3zM473 50l5 3-5 3zM505 50l5 3-5 3zM537 50l5 3-5 3zM601 50l5 3-5 3zM633 50l5 3-5 3zM728 50l5 3-5 3zM760 50l5 3-5 3zM792 50l5 3-5 3zM824 50l5 3-5 3z"/></g>

<!-- left toolbar icons -->
<g filter="url(#s)">
<path d="M5 73L22 78L17 84L28 97L23 100L12 88L8 94Z" fill="url(#bl)"/>
<g transform="translate(16 119)"><path d="M13 -13L-7 -4L7 11Z" fill="url(#bl)" stroke="#2a1e10" stroke-width=".6"/><path d="M-9 2L-1 11L-8 14Z" fill="#8d7354"/><path d="M13 -13L-7 -4L3 -1Z" fill="#2c2014"/></g>
<g transform="translate(16 151)"><path d="M-12 -3L-5 -8L-4 -3C0 -5 4 -3 4 1C4 5 -2 6 -5 3L-10 9C-4 13 6 13 10 7C14 1 11 -9 3 -10C0 -12 -4 -10 -6 -10L-6 -13Z" fill="url(#bl)"/></g>
<g transform="translate(16 181)"><ellipse rx="12" ry="8" transform="rotate(-20)" fill="url(#bl)"/><ellipse cx="-1" cy="-1" rx="7" ry="6" fill="#d9c6a6"/><ellipse rx="12" ry="4" transform="rotate(-20)" fill="none" stroke="#3a2a16"/></g>
<g transform="translate(16 215)"><path d="M-9 -10L-5 -12L11 13L9 15Z" fill="url(#bl)"/><circle cx="-7" cy="-11" r="3.500" fill="url(#b)"/></g>
<g transform="translate(16 246)" fill="none" stroke="#2e2214" stroke-width="2"><path d="M8 12L-4 13L11 7L-11 -5" stroke="#8d7354" stroke-width="5"/><rect x="-10" y="-10" width="10" height="17" rx="4" transform="rotate(-38)" stroke="#d9c6a6"/><rect x="-2" y="-6" width="10" height="17" rx="4" transform="rotate(-38)" stroke="#3f2c18"/></g>
<g transform="translate(16 346)"><path d="M0 -13L5 -6H2V-2L13 -1L6 5L5 2L2 3V9H5L0 14L-5 9H-2V3L-6 2L-7 5L-13 -1L-2 -2V-6H-5Z" fill="url(#bl)"/><ellipse rx="5" ry="6" fill="#3c2c18"/></g>
<g transform="translate(16 377)"><path d="M0 -13L5 -7H2V-3H7V-6L13 0L7 6V3H2V7H5L0 13L-5 7H-2V3H-7V6L-13 0L-7 -6V-3H-2V-7H-5Z" fill="url(#bl)"/><ellipse rx="6" ry="5" fill="none" stroke="#3c2c18" stroke-width="1.500"/></g>
<g transform="translate(16 408)"><path d="M-13 0L-7 -4V-2H7V-4L13 0L7 4V2H2V7H5L0 13L-5 7H-2V2H-7V4Z" fill="url(#bl)"/><ellipse cy="-1" rx="5" ry="4" fill="#d9c6a6" stroke="#3c2c18"/></g>
<g transform="translate(16 440)"><circle r="14" fill="url(#b)"/><path d="M-9 0H9M0 -9V9" stroke="#3c2c18" stroke-width="3"/></g>
<g transform="translate(16 474)"><path d="M-13 -10L0 -13L13 -9L11 5L0 14L-11 5Z" fill="#6b5134"/><path d="M-13 -10L0 -4L13 -9L0 -13Z" fill="#3a2a16"/><path d="M-10 4L0 -4L10 4L0 13Z" fill="#e6d6ba"/><path d="M-5 0L5 8M5 0L-5 8" stroke="#6b5134"/></g>
</g>
<g transform="translate(16 522)" filter="url(#gl)"><rect x="-11" y="-6" width="23" height="15" rx="2" fill="#f0f4ea"/><rect x="-3" y="-9" width="8" height="4" fill="#f0f4ea"/><circle cy="1" r="5.500" fill="#8d9a9c"/></g>
<g transform="translate(16 553)" fill="#a8b2c0"><path d="M-8 -2L-7 -9L-5 -9L-4 -3L-4 -11L-1 -11L0 -3L1 -11L4 -11L4 -3L6 -8L8 -7L6 4L4 11L-5 11L-7 4Z"/></g>
<path d="M27 550l4 4-4 4z" fill="#1a2230"/>
<g transform="translate(15 583)" fill="none" stroke="#a8b2c0" stroke-width="3"><circle cx="-2" cy="-3" r="7"/><path d="M3 3L11 10" stroke-width="4"/></g>
<path d="M27 580l4 4-4 4z" fill="#1a2230"/>
<path d="M26 452h5l-3 3h-2z" fill="#fff" stroke="#222" stroke-width=".5"/>

<!-- top right stage icons -->
<g transform="translate(1581 11)" filter="url(#gl)"><path d="M-9 -1L-4 -7L1 -8L9 -14L10 -12L5 -8L11 -9L11 -7L6 -5L11 -4L10 -2L5 -1L8 2L7 3L2 1L-1 4L-5 15L-8 14L-8 6Z" fill="#fff"/></g>
<g fill="none" stroke="#9aa5b5" stroke-width="2.400">
<path d="M1606 22L1612 13L1608 8L1616 6L1622 1M1610 16L1617 11" transform="translate(-2 0)"/>
<path d="M1640 26L1642 14L1655 2L1665 5L1658 16L1646 24ZM1648 9L1656 17"/>
<path d="M1682 26L1685 16L1692 5L1700 0M1687 14L1692 19L1697 6"/>
<path d="M1714 12L1724 1L1741 5L1730 20L1720 25ZM1719 8L1735 14M1725 2L1722 22"/>
</g>
<circle cx="1850" cy="12" r="5.500" fill="#4e8ac0" stroke="#e5edf5" stroke-width="1.500"/><circle cx="1850" cy="12" r="2" fill="#fff"/>
<rect x="1871" y="8" width="6" height="8" fill="none" stroke="#fff" stroke-width="1.400"/><rect x="1871" y="6.500" width="6" height="1.600" fill="#fff"/>
<text x="1895" y="16" fill="#fff" font-family="Liberation Sans" font-size="11" font-weight="bold">X</text>

<!-- view title icons -->
<g transform="translate(0 71)">
<g fill="#6d7888"><circle cx="1545" cy="-5" r="3.500"/><circle cx="1547" cy="2" r="4"/><rect x="1547" y="-7" width="2" height="12"/></g>
<g fill="none" stroke="#aeb7c4"><rect x="1562.500" y="-8.500" width="6" height="5" fill="#aeb7c4"/><path d="M1565.500 -3V1"/><rect x="1562.500" y="1.500" width="6" height="6"/></g>
<g fill="none" stroke="#8690a0" stroke-width="1.400"><path d="M1577 8L1580 0L1584 2L1587 8M1583 8L1586 0L1590 2L1592 8"/></g>
<g><circle cx="1605" cy="0" r="8" fill="#2a3548" stroke="#fff" stroke-width="1.400"/><path d="M1601 -6V6M1609 -6V6M1598 -3H1612M1598 3H1612M1605 -8V8" stroke="#fff"/></g>
<rect x="1626" y="-9" width="12" height="18" fill="#fff" filter="url(#gl)"/>
<g fill="#98a3b3"><rect x="1642" y="-9" width="11" height="8"/><rect x="1642" y="1" width="11" height="8"/><rect x="1658" y="-9" width="5" height="8"/><rect x="1664.500" y="-9" width="5" height="8"/><rect x="1658" y="1" width="11.500" height="8"/><rect x="1674" y="-9" width="5" height="8"/><rect x="1680.500" y="-9" width="5" height="8"/><rect x="1674" y="1" width="5" height="8"/><rect x="1680.500" y="1" width="5" height="8"/><rect x="1690" y="-9" width="5" height="8"/><rect x="1690" y="1" width="5" height="8"/><rect x="1696.500" y="1" width="5" height="8"/></g>
<g fill="none" stroke="#e8ecf2" stroke-width="1.200"><path d="M1715 -7L1722 -10L1729 -7L1728 4L1722 10L1716 4ZM1722 -10V0L1716 4M1722 0L1728 4"/><path d="M1736 -7L1743 -10L1750 -7L1749 4L1743 10L1737 4ZM1743 -10V0L1737 4M1743 0L1749 4M1736 -2L1750 -2"/><path d="M1755 -7L1762 -10L1769 -7L1768 4L1762 10L1756 4ZM1758 -1L1762 2L1766 -1L1762 -4Z"/></g>
<g fill="none" stroke="#b5bdc9" stroke-width="1.100"><circle cx="1789" cy="0" r="7.500"/><path d="M1789 7V-6M1785 -1L1789 -6L1793 -1" fill="#e8ecf2"/><path stroke-dasharray="2 2" d="M1803 -6L1810 -9L1817 -6L1817 4L1810 9L1803 4Z"/><path d="M1823 -6L1830 -9L1837 -6L1837 4L1830 9L1823 4ZM1823 -6L1830 -2L1837 -6M1830 -2V9"/></g>
<path d="M1845 -6L1852 -9L1859 -6L1859 4L1852 9L1845 4Z" fill="#98a2b0"/><path d="M1845 -6L1852 -2L1852 9L1845 4Z" fill="#6b7585"/>
<ellipse cx="1873" cy="0" rx="7" ry="9" fill="url(#ball)" filter="url(#gl)"/>
<circle cx="1894" cy="0" r="8" fill="#7d8796"/><path d="M1889 5L1898 -7M1891 7L1900 -4" stroke="#4d5766" stroke-width="1.500"/>
</g>

<!-- checkboxes -->
<g fill="#6f93bd" stroke="#1c2a44"><rect x="1933.500" y="122.500" width="7" height="7"/><rect x="1933.500" y="137.500" width="7" height="7"/><rect x="1933.500" y="277.500" width="7" height="7"/></g>
<rect x="1933.500" y="320.500" width="7" height="7" fill="#93a4ba" stroke="#1c2a44"/>
<g fill="none" stroke="#0d1422" stroke-width="1.500"><path d="M1935 125L1937 128L1941 120M1935 140L1937 143L1941 135M1935 280L1937 283L1941 275"/></g>
<!-- shader ball -->
<circle cx="1962.500" cy="208.500" r="28.500" fill="url(#sk)"/>
<ellipse cx="1952" cy="223" rx="10" ry="9" fill="#8f514a" opacity=".75" filter="url(#bs)"/>
<circle cx="1947" cy="203" r="3.500" fill="#fff3dd" filter="url(#gl)"/><circle cx="1976" cy="203" r="3.500" fill="#fff3dd" filter="url(#gl)"/>
<path d="M1968 182L1982 190L1984 195L1975 190Z" fill="#d8c8bc" opacity=".75" filter="url(#bs)"/>
<!-- small glyphs -->
<path d="M2240 38H2245V35L2250 40.500L2245 46V43H2240Z" fill="#07101c"/>
<g fill="none" stroke="#0e1522" stroke-width="1"><path d="M2140 345L2142.500 347L2145 345M2140 348L2142.500 350L2145 348" transform="translate(-2 -2)"/><path d="M2243 571L2245.500 573L2248 571M2243 574L2245.500 576L2248 574" transform="translate(-3 -1)"/></g>
<g><rect x="2212" y="367.500" width="15" height="15" fill="#8d98a9" stroke="#3a4355" stroke-width=".6"/><rect x="2229" y="367.500" width="15" height="15" fill="#8d98a9" stroke="#3a4355" stroke-width=".6"/><rect x="2215" y="370" width="9" height="10" fill="none" stroke="#10151d" stroke-width="1.300"/><rect x="2217" y="370" width="5" height="3" fill="#10151d"/><path d="M2232 374H2241V380H2232ZM2236.500 372V369M2234.500 371L2236.500 369L2238.500 371" fill="none" stroke="#10151d" stroke-width="1.200"/></g>
<!-- transport glyphs -->
<g fill="#fff">
<path d="M2344 32h2v10h-2zM2353 32v10l-7-5z"/><path d="M2356 37l6-5v10zM2362 37l6-5v10z" transform="translate(-1 0)"/>
<rect x="2376" y="33" width="8" height="8"/>
<path d="M2394 32l8 5-8 5z"/><path d="M2409 32l6 5-6 5zM2415 32l6 5-6 5z"/><path d="M2428 32l7 5-7 5zM2435 32h2v10h-2z"/>
<path d="M2452 33h2v-2h2v2h4v8h-8z" opacity=".95"/>
</g>
<g stroke="#16305c"><path d="M2354.500 30V45M2371.500 30V45M2388.500 30V45M2405.500 30V45M2422.500 30V45"/></g>
<rect x="2454" y="35" width="5" height="3" fill="#3e6ca3"/>
</svg>
</body></html>
